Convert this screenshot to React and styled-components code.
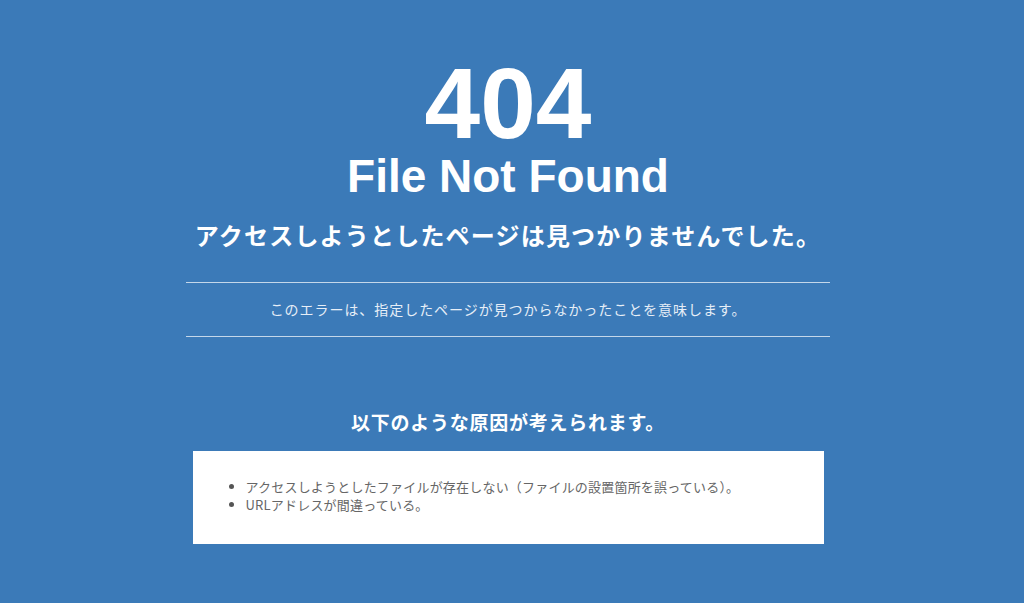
import React from "react";
import styled, { createGlobalStyle } from "styled-components";

const Global = createGlobalStyle`
  html, body { margin: 0; padding: 0; background: #3b7ab8; }
  body { font-family: "Noto Sans CJK JP", "Noto Sans", sans-serif; }
`;

const Page = styled.main`
  min-height: 603px;
  box-sizing: border-box;
  padding: 53px 8px 0 0;
  display: flex;
  flex-direction: column;
  align-items: center;
  color: #fff;
`;

const Code = styled.h1`
  margin: 0;
  font-family: "Liberation Sans", Arial, sans-serif;
  font-weight: 700;
  font-size: 100px;
  line-height: 100px;
`;

const Title = styled.h2`
  margin: 0;
  font-family: "Liberation Sans", Arial, sans-serif;
  font-weight: 700;
  font-size: 46px;
  line-height: 46px;
`;

const Lead = styled.p`
  margin: 18px 0 0;
  font-weight: 700;
  font-size: 24px;
  line-height: 36px;
  letter-spacing: 1.2px;
`;

const Notice = styled.div`
  margin-top: 29px;
  width: 644px;
  border-top: 1px solid rgba(255, 255, 255, 0.7);
  border-bottom: 1px solid rgba(255, 255, 255, 0.7);
  padding: 15px 0 16px;
  text-align: center;
  font-size: 14px;
  line-height: 22px;
  letter-spacing: 0.95px;
  color: #e6eef7;
`;

const Causes = styled.h3`
  margin: 71px 0 0;
  font-weight: 700;
  font-size: 19px;
  line-height: 28px;
  letter-spacing: 0.75px;
`;

const Box = styled.ul`
  margin: 15px 0 0;
  width: 631px;
  box-sizing: border-box;
  height: 93px;
  background: #fff;
  padding: 27px 20px 0 53px;
  list-style: disc;
  color: #666;
  font-size: 13px;
  line-height: 18px;
  letter-spacing: 0.2px;
`;

const Item = styled.li`
  &::marker { color: #555; }
`;

export default function App() {
  return (
    <>
      <Global />
      <Page>
        <Code>404</Code>
        <Title>File Not Found</Title>
        <Lead>アクセスしようとしたページは見つかりませんでした。</Lead>
        <Notice>このエラーは、指定したページが見つからなかったことを意味します。</Notice>
        <Causes>以下のような原因が考えられます。</Causes>
        <Box>
          <Item>アクセスしようとしたファイルが存在しない（ファイルの設置箇所を誤っている）。</Item>
          <Item>URLアドレスが間違っている。</Item>
        </Box>
      </Page>
    </>
  );
}
